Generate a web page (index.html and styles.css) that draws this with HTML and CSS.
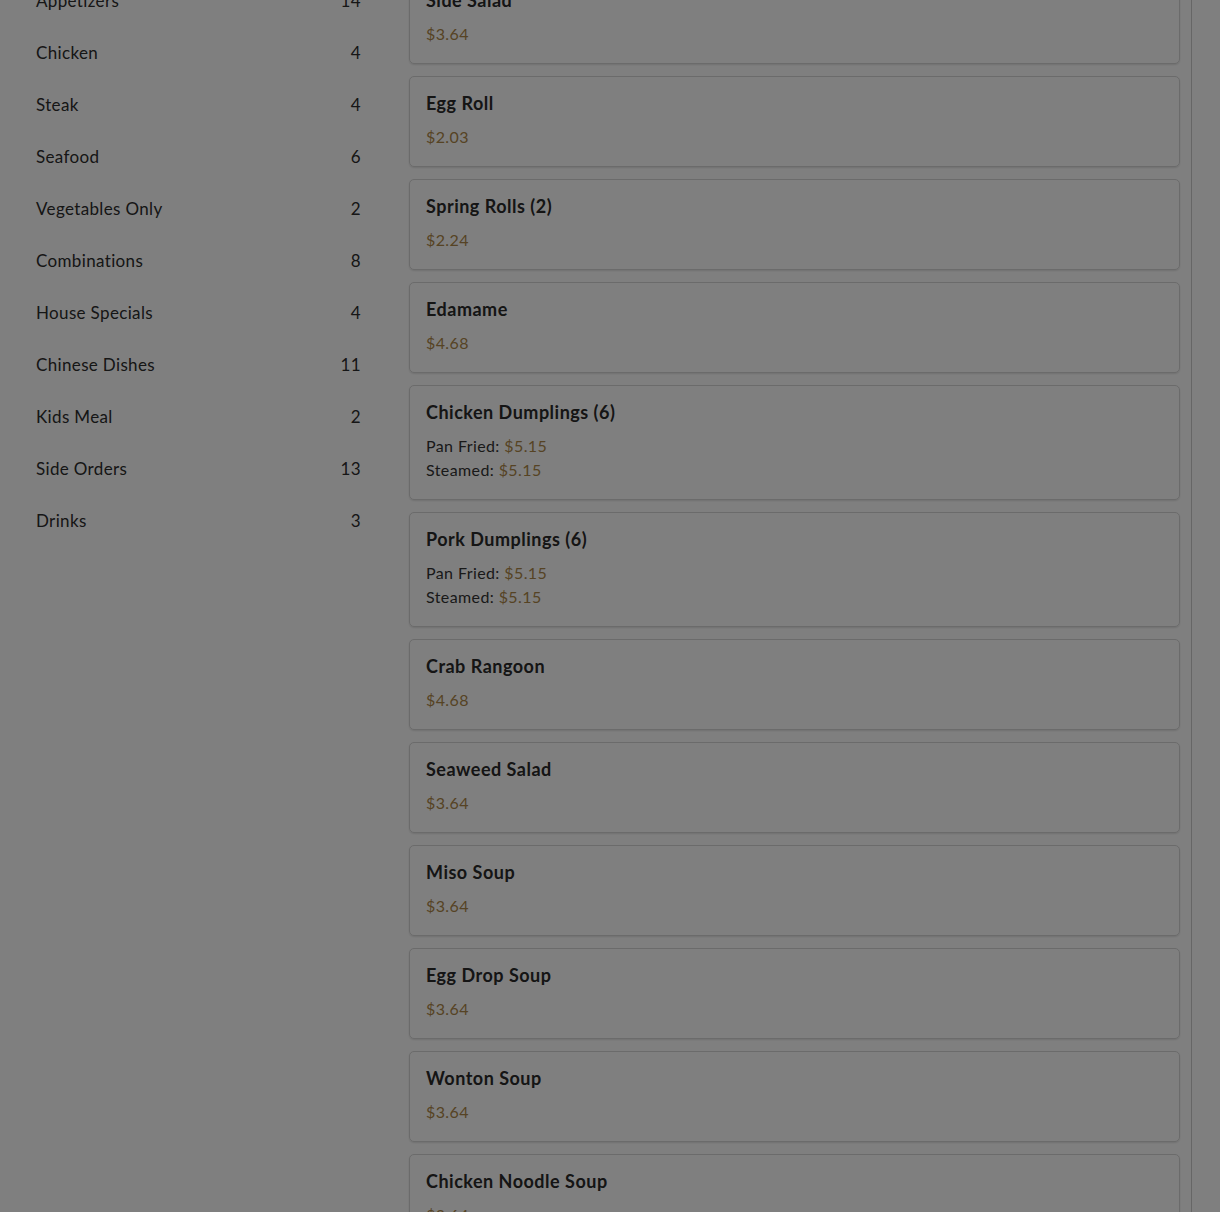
FILE: index.html
```html
<!DOCTYPE html>
<html lang="en">
<head>
<meta charset="utf-8">
<title>Menu</title>
<link rel="stylesheet" href="styles.css">
</head>
<body>
<div class="layout">
  <aside class="sidebar">
    <ul class="cats">
      <li class="cat"><span>Appetizers</span><span>14</span></li>
      <li class="cat"><span>Chicken</span><span>4</span></li>
      <li class="cat"><span>Steak</span><span>4</span></li>
      <li class="cat"><span>Seafood</span><span>6</span></li>
      <li class="cat"><span>Vegetables Only</span><span>2</span></li>
      <li class="cat"><span>Combinations</span><span>8</span></li>
      <li class="cat"><span>House Specials</span><span>4</span></li>
      <li class="cat"><span>Chinese Dishes</span><span>11</span></li>
      <li class="cat"><span>Kids Meal</span><span>2</span></li>
      <li class="cat"><span>Side Orders</span><span>13</span></li>
      <li class="cat"><span>Drinks</span><span>3</span></li>
    </ul>
  </aside>
  <main class="menu">
    <div class="item"><h3 class="name">Side Salad</h3><p class="line"><span class="price">$3.64</span></p></div>
    <div class="item"><h3 class="name">Egg Roll</h3><p class="line"><span class="price">$2.03</span></p></div>
    <div class="item"><h3 class="name">Spring Rolls (2)</h3><p class="line"><span class="price">$2.24</span></p></div>
    <div class="item"><h3 class="name">Edamame</h3><p class="line"><span class="price">$4.68</span></p></div>
    <div class="item"><h3 class="name">Chicken Dumplings (6)</h3><p class="line">Pan Fried: <span class="price">$5.15</span></p><p class="line">Steamed: <span class="price">$5.15</span></p></div>
    <div class="item"><h3 class="name">Pork Dumplings (6)</h3><p class="line">Pan Fried: <span class="price">$5.15</span></p><p class="line">Steamed: <span class="price">$5.15</span></p></div>
    <div class="item"><h3 class="name">Crab Rangoon</h3><p class="line"><span class="price">$4.68</span></p></div>
    <div class="item"><h3 class="name">Seaweed Salad</h3><p class="line"><span class="price">$3.64</span></p></div>
    <div class="item"><h3 class="name">Miso Soup</h3><p class="line"><span class="price">$3.64</span></p></div>
    <div class="item"><h3 class="name">Egg Drop Soup</h3><p class="line"><span class="price">$3.64</span></p></div>
    <div class="item"><h3 class="name">Wonton Soup</h3><p class="line"><span class="price">$3.64</span></p></div>
    <div class="item"><h3 class="name">Chicken Noodle Soup</h3><p class="line"><span class="price">$3.64</span></p></div>
    <div class="item"><h3 class="name">Hot &amp; Sour Soup</h3><p class="line"><span class="price">$3.64</span></p></div>
  </main>
</div>
<div class="backdrop"></div>
</body>
</html>
```
FILE: styles.css
```css
html, body {
  margin: 0;
  padding: 0;
  background: #ffffff;
  overflow: hidden;
}
body {
  font-family: Lato, "Noto Sans", sans-serif;
  color: #333333;
}
.layout {
  display: flex;
  align-items: flex-start;
  margin-top: -27px;
  width: 1192px;
}
.sidebar {
  width: 361px;
  padding-left: 36px;
  padding-top: 2px;
  box-sizing: border-box;
  flex: none;
}
.cats {
  list-style: none;
  margin: 0;
  padding: 0;
}
.cat {
  display: flex;
  justify-content: space-between;
  height: 52px;
  align-items: center;
  font-size: 17px;
  line-height: 22px;
  letter-spacing: 0.35px;
  color: #2c2c2c;
}
.menu {
  flex: 1;
  margin-left: 48px;
  padding-right: 11px;
  border-right: 1px solid #cccccc;
  display: flex;
  flex-direction: column;
  gap: 12px;
}
.item {
  border: 1px solid #d6d6d6;
  border-radius: 5px;
  padding: 16px 16px 17px;
  box-shadow: 0 1px 2px rgba(0,0,0,0.12);
}
.name {
  margin: 0 0 12px;
  font-size: 18px;
  line-height: 20px;
  font-weight: 700;
  letter-spacing: 0.5px;
  color: #2a2a2a;
}
.line {
  margin: 0;
  font-size: 16px;
  line-height: 24px;
  letter-spacing: 0.4px;
}
.price {
  color: #ad8748;
}
.backdrop {
  position: fixed;
  inset: 0;
  background: rgba(0,0,0,0.5);
}
```
